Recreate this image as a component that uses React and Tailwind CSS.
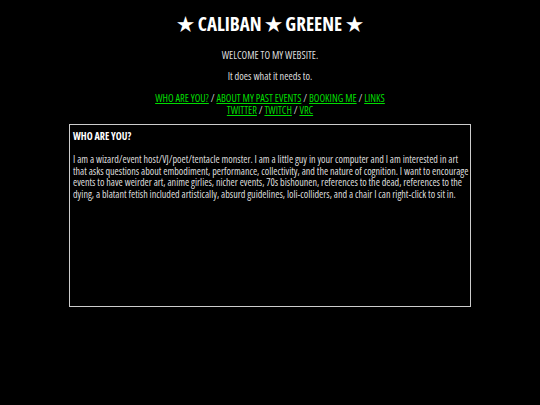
import React from "react";

const links = [
  ["WHO ARE YOU?", "ABOUT MY PAST EVENTS", "BOOKING ME", "LINKS"],
  ["TWITTER", "TWITCH", "VRC"],
];

const NavLine = ({ items }) => (
  <div>
    {items.map((label, i) => (
      <React.Fragment key={label}>
        {i > 0 && <span className="text-[#cccccc]"> / </span>}
        <a href="#" className="text-[#00dd00] underline">{label}</a>
      </React.Fragment>
    ))}
  </div>
);

export default function App() {
  return (
    <div
      className="min-h-[405px] w-full bg-black text-[#dddddd] flex flex-col items-center font-stretch-condensed"
      style={{ fontFamily: '"Open Sans", sans-serif' }}
    >
      <h1 className="mt-[12px] text-[19px] leading-[24px] font-bold text-white">★ CALIBAN ★ GREENE ★</h1>
      <p className="mt-[13px] text-[10.3px] leading-[12px]">WELCOME TO MY WEBSITE.</p>
      <p className="mt-[9px] text-[10.3px] leading-[12px]">It does what it needs to.</p>
      <div className="mt-[10px] text-[10.3px] leading-[12px] text-center">
        {links.map((row, i) => <NavLine key={i} items={row} />)}
      </div>
      <div className="mt-[8px] w-[402px] h-[183px] border border-[#cccccc] px-[3px] pt-[6px] text-[10.1px] leading-[11.4px]">
        <h2 className="font-bold text-white">WHO ARE YOU?</h2>
        <p className="mt-[12px] whitespace-nowrap">
          I am a wizard/event host/VJ/poet/tentacle monster. I am a little guy in your computer and I am interested in art<br />
          that asks questions about embodiment, performance, collectivity, and the nature of cognition. I want to encourage<br />
          events to have weirder art, anime girlies, nicher events, 70s bishounen, references to the dead, references to the<br />
          dying, a blatant fetish included artistically, absurd guidelines, loli-colliders, and a chair I can right-click to sit in.
        </p>
      </div>
    </div>
  );
}
